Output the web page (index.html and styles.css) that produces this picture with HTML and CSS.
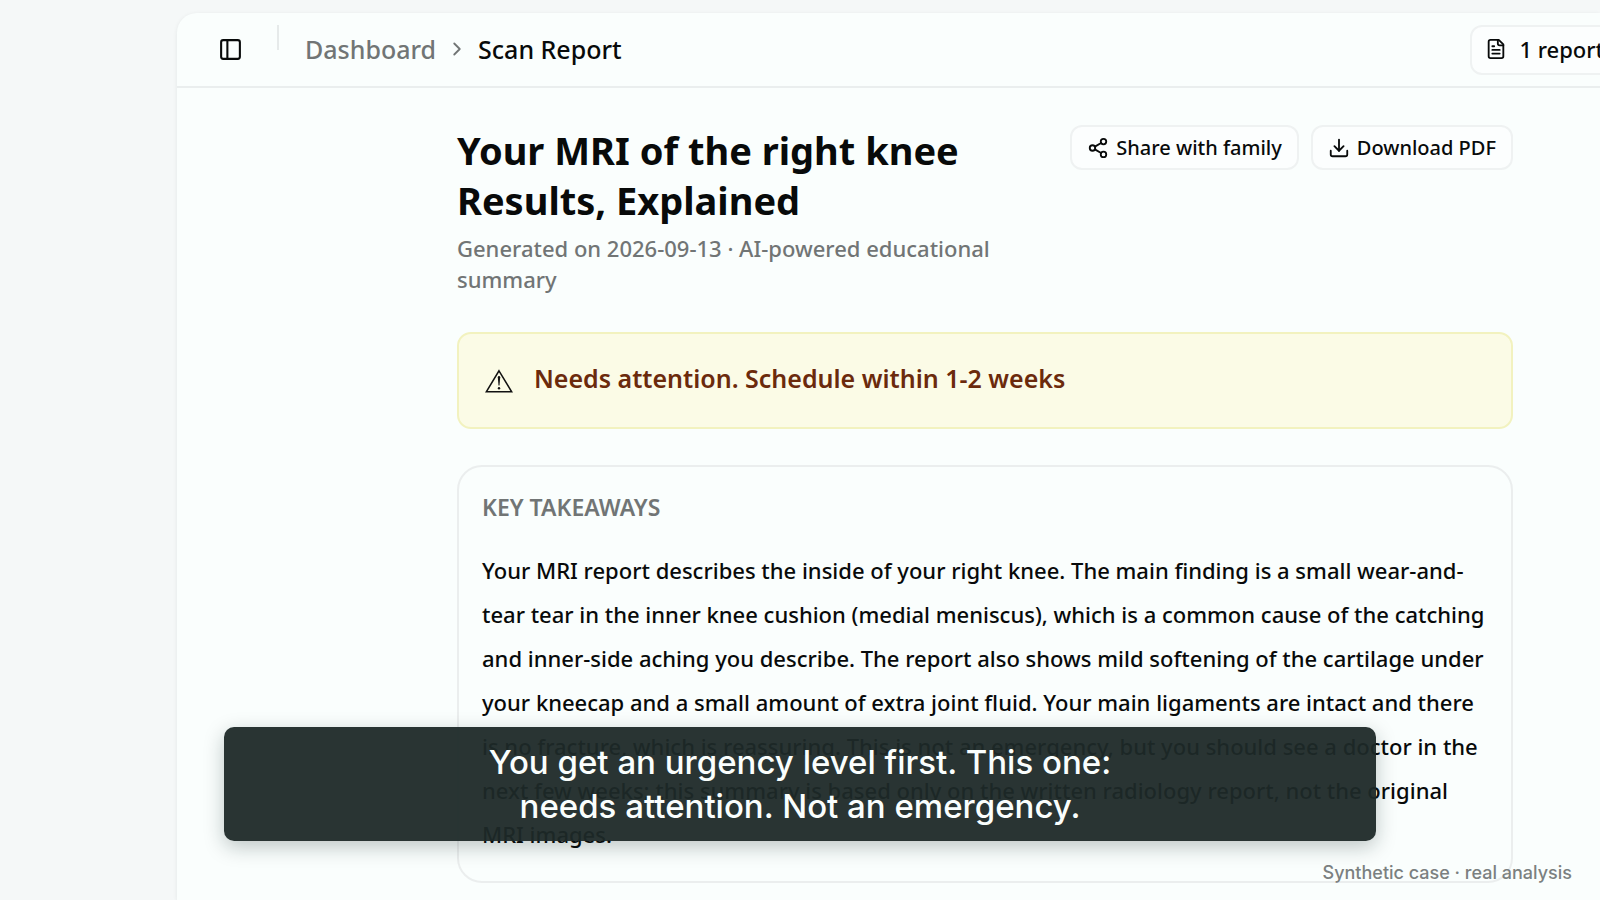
FILE: index.html
```html
<!DOCTYPE html>
<html lang="en">
<head>
<meta charset="utf-8">
<meta name="viewport" content="width=device-width, initial-scale=1">
<title>Scan Report</title>
<link rel="stylesheet" href="styles.css">
</head>
<body>
<div class="shell">
  <main class="panel">
    <header class="topbar">
      <button class="toggle" type="button" aria-label="Toggle sidebar">
        <svg class="icon icon-lg" viewBox="0 0 24 24" aria-hidden="true"><rect x="3" y="3" width="18" height="18" rx="2"/><path d="M9 3v18"/></svg>
      </button>
      <span class="divider"></span>
      <nav class="crumbs" aria-label="Breadcrumb">
        <a class="crumb-link" href="#">Dashboard</a>
        <svg class="icon chevron" viewBox="0 0 24 24" aria-hidden="true"><path d="m9 18 6-6-6-6"/></svg>
        <span class="crumb-current">Scan Report</span>
      </nav>
      <button class="btn btn-reports" type="button">
        <svg class="icon" viewBox="0 0 24 24" aria-hidden="true"><path d="M15 2H6a2 2 0 0 0-2 2v16a2 2 0 0 0 2 2h12a2 2 0 0 0 2-2V7Z"/><path d="M14 2v4a2 2 0 0 0 2 2h4"/><path d="M10 9H8"/><path d="M16 13H8"/><path d="M16 17H8"/></svg>
        <span>1 report</span>
      </button>
    </header>
    <div class="content">
      <section class="intro">
        <div class="intro-text">
          <h1 class="title">Your MRI of the right knee Results, Explained</h1>
          <p class="subtitle">Generated on 2026-09-13 · AI-powered educational summary</p>
        </div>
        <div class="actions">
          <button class="btn" type="button">
            <svg class="icon" viewBox="0 0 24 24" aria-hidden="true"><circle cx="18" cy="5" r="3"/><circle cx="6" cy="12" r="3"/><circle cx="18" cy="19" r="3"/><path d="m8.59 13.51 6.83 3.98"/><path d="m15.41 6.51-6.82 3.98"/></svg>
            Share with family
          </button>
          <button class="btn" type="button">
            <svg class="icon" viewBox="0 0 24 24" aria-hidden="true"><path d="M21 15v4a2 2 0 0 1-2 2H5a2 2 0 0 1-2-2v-4"/><path d="m7 10 5 5 5-5"/><path d="M12 15V3"/></svg>
            Download PDF
          </button>
        </div>
      </section>
      <section class="alert">
        <svg class="warning" viewBox="0 0 28 24" aria-hidden="true"><path class="warning-line" d="M14 1.8 26.7 22.8H1.3Z"/><path class="warning-mark" d="M12.8 8.2a1.2 1.2 0 0 1 2.4 0l-.7 8.3h-1Z"/><circle class="warning-mark" cx="14" cy="19.3" r="1.2"/></svg>
        <p class="alert-text">Needs attention. Schedule within 1-2 weeks</p>
      </section>
      <section class="card">
        <h2 class="card-title">KEY TAKEAWAYS</h2>
        <p class="card-text">Your MRI report describes the inside of your right knee. The main finding is a small wear-and-tear tear in the inner knee cushion (medial meniscus), which is a common cause of the catching and inner-side aching you describe. The report also shows mild softening of the cartilage under your kneecap and a small amount of extra joint fluid. Your main ligaments are intact and there is no fracture, which is reassuring. This is not an emergency, but you should see a doctor in the next few weeks; this summary is based only on the written radiology report, not the original MRI images.</p>
      </section>
    </div>
  </main>
</div>
<div class="caption">You get an urgency level first. This one:<br>needs attention. Not an emergency.</div>
<div class="note">Synthetic case · real analysis</div>
</body>
</html>
```
FILE: styles.css
```css
* { box-sizing: border-box; }

body {
  margin: 0;
  height: 100vh;
  overflow: hidden;
  background: #f5f8f8;
  color: #080a0a;
  font-family: "Noto Sans", sans-serif;
  font-weight: 500;
}

h1, h2, p { margin: 0; }

.shell {
  min-height: 100vh;
  padding: 13px 0 0 177px;
  display: flex;
}

.panel {
  flex: 1;
  min-width: 0;
  background: #fafefd;
  border-top-left-radius: 20px;
  box-shadow: 0 1px 4px rgba(20, 40, 40, 0.08);
}

.topbar {
  height: 75px;
  display: flex;
  align-items: center;
  border-bottom: 2px solid #eaeeee;
  padding-left: 41px;
  overflow: hidden;
}

.toggle {
  display: flex;
  padding: 0;
  border: 0;
  background: none;
  color: inherit;
}

.icon {
  width: 22px;
  height: 22px;
  flex: none;
  fill: none;
  stroke: currentColor;
  stroke-width: 2;
  stroke-linecap: round;
  stroke-linejoin: round;
}

.icon-lg { width: 25px; height: 25px; }

.divider {
  align-self: flex-start;
  width: 2px;
  height: 25px;
  margin: 12px 26px 0 34px;
  background: #e6eaea;
}

.crumbs {
  flex: 1;
  display: flex;
  align-items: center;
  gap: 10px;
  padding-bottom: 2px;
  font-size: 25px;
  line-height: 36px;
}

.crumb-link { color: #717575; text-decoration: none; }
.chevron { color: #717575; }

.btn {
  display: flex;
  align-items: center;
  gap: 7px;
  height: 45px;
  padding: 0 15px;
  border: 2px solid #eff2f2;
  border-radius: 12px;
  background: #fcfefe;
  color: inherit;
  font: 500 20px/30px "Noto Sans", sans-serif;
  white-space: nowrap;
}

.btn-reports {
  height: 50px;
  gap: 12px;
  padding: 0 48px 2px 13px;
  margin-right: -54px;
  font-size: 22px;
}

.content { padding: 37px 87px 0 280px; }

.intro {
  display: flex;
  align-items: flex-start;
  gap: 24px;
}

.intro-text { flex: 1; }

.title {
  font-size: 38px;
  line-height: 50px;
  font-weight: 700;
}

.subtitle {
  margin-top: 8px;
  font-size: 22px;
  line-height: 31px;
  color: #717575;
}

.actions { display: flex; gap: 12px; }

.alert {
  display: flex;
  align-items: center;
  gap: 21px;
  margin-top: 37px;
  height: 97px;
  padding: 0 26px;
  border: 2px solid #f2f2bf;
  border-radius: 14px;
  background: #fbfbe6;
}

.warning { width: 28px; height: 24px; flex: none; }
.warning-line { fill: none; stroke: #111; stroke-width: 1.5; }
.warning-mark { fill: #111; }

.alert-text {
  padding-bottom: 5px;
  font-size: 25px;
  line-height: 36px;
  font-weight: 600;
  color: #6b2a0c;
}

.card {
  margin-top: 36px;
  padding: 25px 23px;
  border: 2px solid #ebeeee;
  border-radius: 25px;
}

.card-title {
  font-size: 23px;
  line-height: 31px;
  font-weight: 600;
  color: #717575;
}

.card-text {
  margin-top: 25px;
  font-size: 22px;
  line-height: 44px;
}

.caption {
  position: absolute;
  left: 50%;
  bottom: 59px;
  width: 72%;
  transform: translateX(-50%);
  padding: 13px 32px;
  border-radius: 10px;
  background: rgba(30, 41, 40, 0.95);
  box-shadow: 0 6px 20px rgba(10, 30, 30, 0.25);
  color: #fafefd;
  font: 500 33px/44px Inter, sans-serif;
  text-align: center;
}

.note {
  position: absolute;
  right: 28px;
  bottom: 15px;
  color: #7b8080;
  font: 500 18px/24px Inter, sans-serif;
}
```
